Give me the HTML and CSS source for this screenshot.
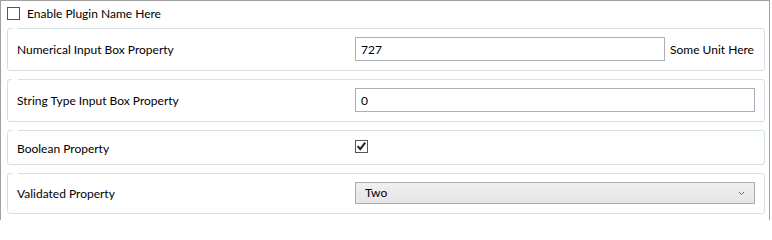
FILE: index.html
```html
<!DOCTYPE html>
<html>
<head>
<meta charset="utf-8">
<link rel="stylesheet" href="styles.css">
</head>
<body>
<div class="panel">
  <div class="enable-row">
    <span class="check"></span>
    <span class="enable-label">Enable Plugin Name Here</span>
  </div>

  <div class="group">
    <div class="label">Numerical Input Box Property</div>
    <div class="field">
      <div class="textbox short">727</div>
      <span class="unit">Some Unit Here</span>
    </div>
  </div>

  <div class="group">
    <div class="label">String Type Input Box Property</div>
    <div class="field">
      <div class="textbox">0</div>
    </div>
  </div>

  <div class="group bool">
    <div class="label">Boolean Property</div>
    <div class="field">
      <span class="check checked">
        <svg width="11" height="11" viewBox="0 0 11 11"><path d="M1.6 5.2 L4.2 8.2 L9.2 1.6" fill="none" stroke="#222" stroke-width="2"/></svg>
      </span>
    </div>
  </div>

  <div class="group">
    <div class="label">Validated Property</div>
    <div class="field">
      <div class="combo">
        <span class="combo-text">Two</span>
        <svg class="chevron" width="7" height="5" viewBox="0 0 7 5"><path d="M1 1 L3.5 3.5 L6 1" fill="none" stroke="#6a6a6a" stroke-width="1"/></svg>
      </div>
    </div>
  </div>
</div>
</body>
</html>
```

FILE: styles.css
```css
* { box-sizing: border-box; }

html, body {
  margin: 0;
  padding: 0;
  background: #ffffff;
}

body {
  font-family: "Lato", "Noto Sans", sans-serif;
  font-size: 12px;
  color: #000000;
}

.panel {
  width: 770px;
  height: 220px;
  overflow: hidden;
  border: 1px solid #a0a0a0;
  border-bottom: none;
  padding: 6px 4px 0 6px;
}

.enable-row {
  display: flex;
  align-items: center;
  height: 13px;
  margin-bottom: 8px;
}

.check {
  display: inline-flex;
  align-items: center;
  justify-content: center;
  width: 13px;
  height: 13px;
  border: 1px solid #555555;
  background: #ffffff;
  flex: none;
}

.enable-label {
  margin-left: 7px;
  line-height: 14px;
  padding-top: 1px;
}

.group {
  position: relative;
  display: grid;
  grid-template-columns: 338px 400px;
  align-items: center;
  width: 758px;
  height: 43px;
  margin-bottom: 8px;
  padding: 8px 9px 9px 9px;
  border: 1px solid #d5dfe5;
  border-radius: 3px;
}

.group::before {
  content: "";
  position: absolute;
  top: -1px;
  left: 4px;
  width: 6px;
  height: 1px;
  background: #ffffff;
}

.group.bool {
  height: 35px;
}

.group.bool .field {
  align-self: start;
  padding-top: 1px;
}

.group:last-child {
  height: 41px;
}

.label {
  line-height: 16px;
  padding-top: 2px;
  white-space: nowrap;
}

.field {
  display: flex;
  align-items: center;
}

.textbox {
  width: 400px;
  height: 24px;
  border: 1px solid #abadb3;
  background: #ffffff;
  padding: 1px 5px 0 5px;
  line-height: 21px;
}

.textbox.short {
  width: 310px;
}

.unit {
  margin-left: 5px;
  white-space: nowrap;
}

.combo {
  position: relative;
  display: flex;
  align-items: center;
  justify-content: space-between;
  width: 400px;
  height: 22px;
  border: 1px solid #acacac;
  background: linear-gradient(#f0f0f0, #e5e5e5);
  padding: 0 9px 0 9px;
}

.combo-text {
  line-height: 20px;
}

.chevron {
  display: block;
  margin-right: 0;
}
```
